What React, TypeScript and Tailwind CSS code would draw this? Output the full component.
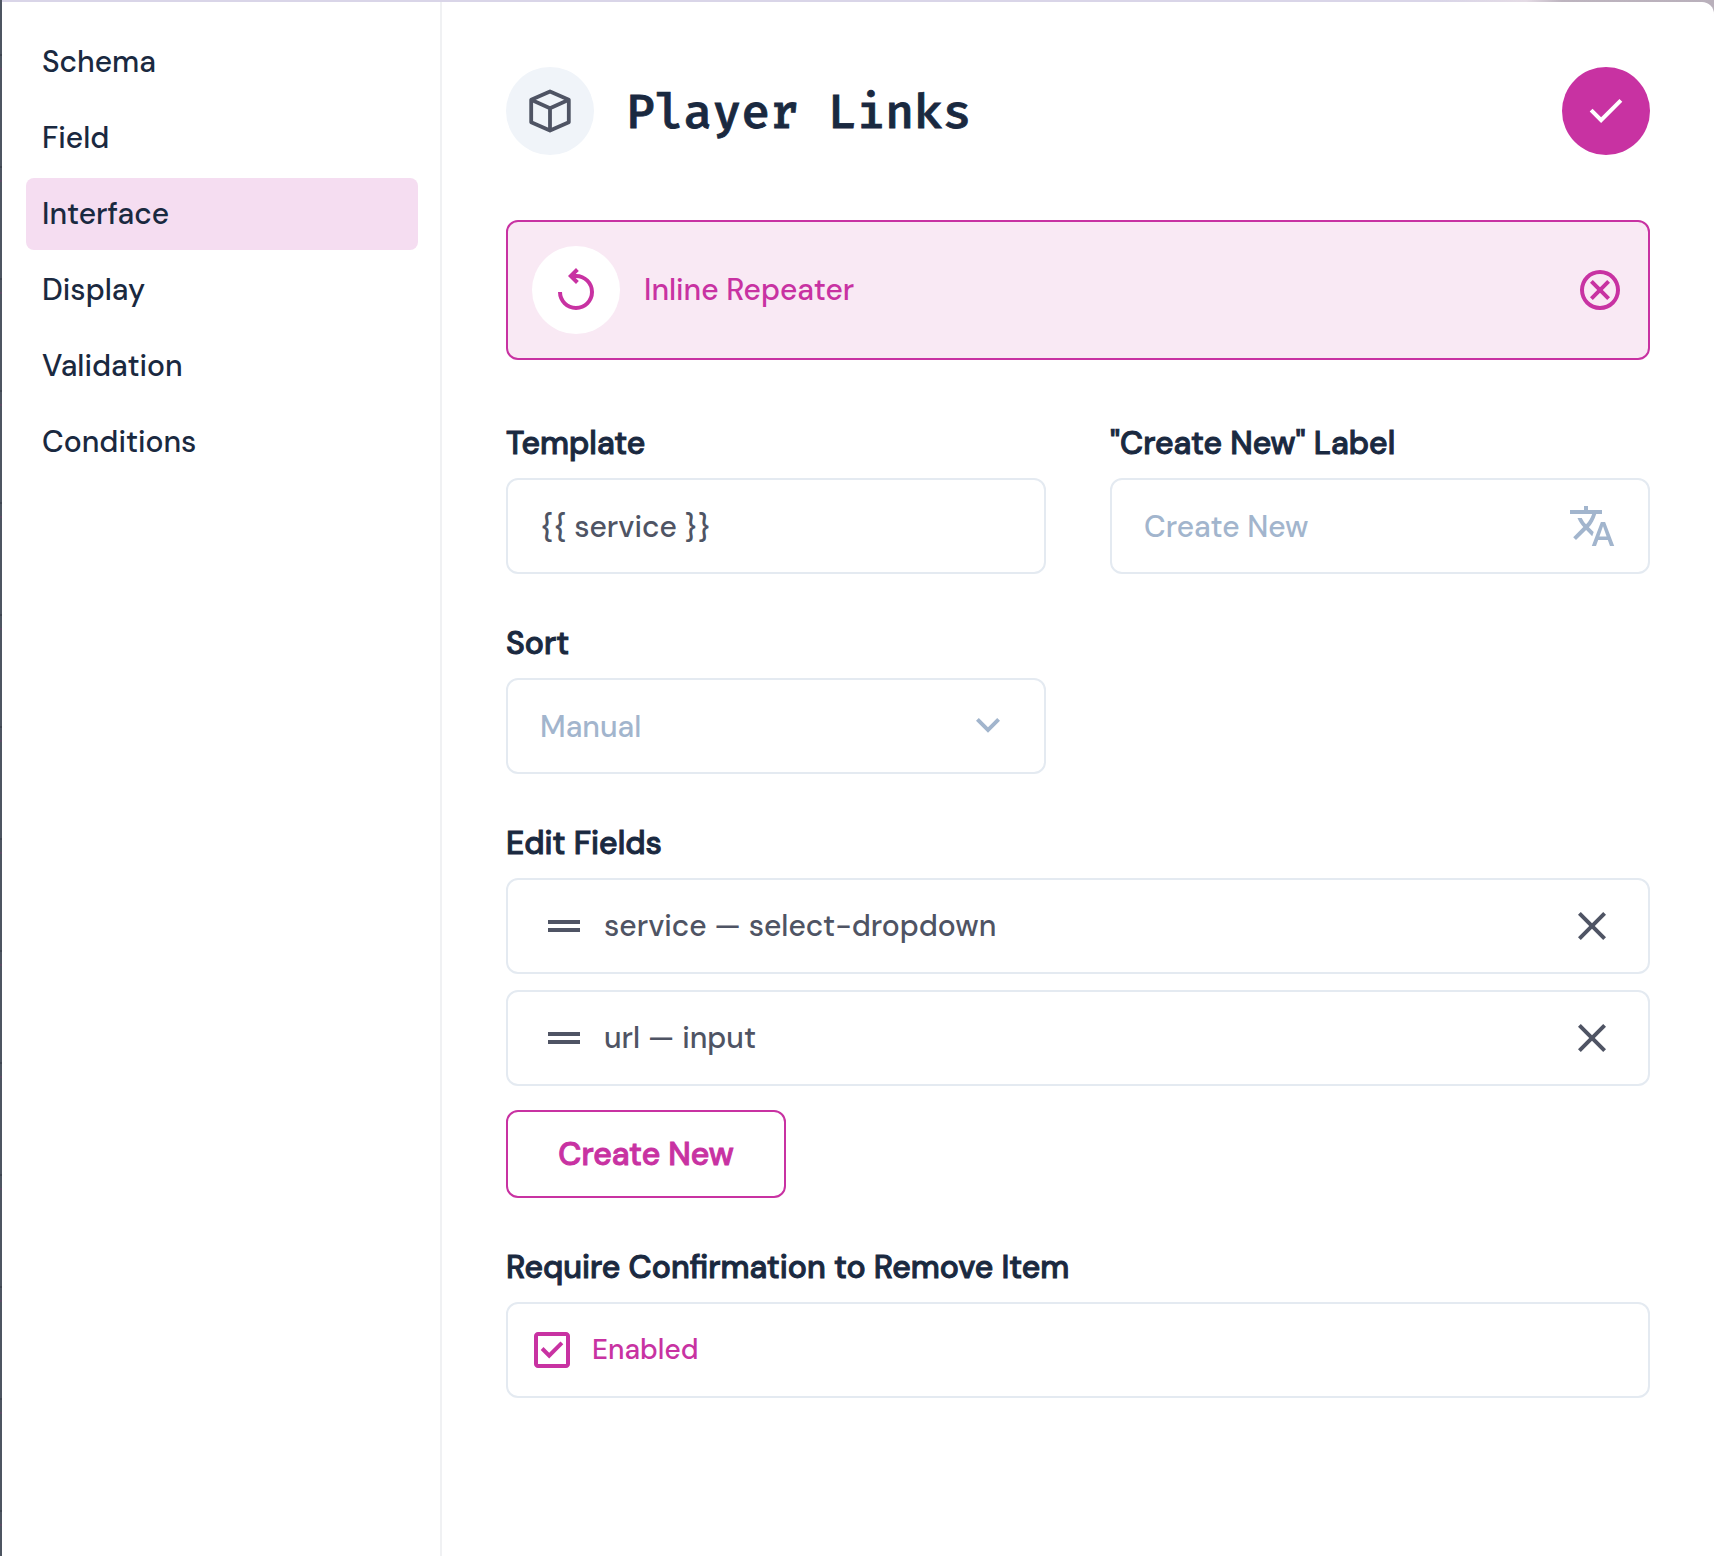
import type { ReactNode } from "react";

const icons = {
  check: "m382-240-228-228 57-57 171 171 367-367 57 57-424 424Z",
  replay:
    "M480-80q-75 0-140.5-28.5t-114-77q-48.5-48.5-77-114T120-440h80q0 117 81.5 198.5T480-160q117 0 198.5-81.5T760-440q0-117-81.5-198.5T480-720h-6l62 62-56 58-160-160 160-160 56 58-62 62h6q75 0 140.5 28.5t114 77q48.5 48.5 77 114T840-440q0 75-28.5 140.5t-77 114q-48.5 48.5-114 77T480-80Z",
  cancel:
    "m336-280 144-144 144 144 56-56-144-144 144-144-56-56-144 144-144-144-56 56 144 144-144 144 56 56ZM480-80q-83 0-156-31.5T197-197q-54-54-85.5-127T80-480q0-83 31.5-156T197-763q54-54 127-85.5T480-880q83 0 156 31.5T763-763q54 54 85.5 127T880-480q0 83-31.5 156T763-197q-54 54-127 85.5T480-80Zm0-80q134 0 227-93t93-227q0-134-93-227t-227-93q-134 0-227 93t-93 227q0 134 93 227t227 93Z",
  translate:
    "m476-80 182-480h84L924-80h-84l-43-122H603L560-80h-84ZM160-200l-56-56 202-202q-35-35-63.5-80T190-640h84q20 39 40 68t48 58q33-33 68.5-92.5T484-720H40v-80h280v-80h80v80h280v80H564q-21 72-63 148t-83 116l96 98-30 82-122-125-202 201Zm468-72h144l-72-204-72 204Z",
  expand: "M480-345 240-585l56-56 184 184 184-184 56 56-240 240Z",
  drag: "M160-360v-80h640v80H160Zm0-160v-80h640v80H160Z",
  close:
    "m256-200-56-56 224-224-224-224 56-56 224 224 224-224 56 56-224 224 224 224-56 56-224-224-224 224Z",
  checkbox:
    "m424-312 282-282-56-56-226 226-114-114-56 56 170 170ZM200-120q-33 0-56.5-23.500T120-200v-560q0-33 23.500-56.500T200-840h560q33 0 56.500 23.500T840-760v560q0 33-23.500 56.500T760-120H200Zm0-80h560v-560H200v560Z",
};

function Icon({ name }: { name: keyof typeof icons }) {
  return (
    <svg className="size-12 shrink-0" viewBox="0 -960 960 960" fill="currentColor">
      <path d={icons[name]} />
    </svg>
  );
}

function BoxIcon() {
  return (
    <svg className="size-12" viewBox="0 0 48 48" fill="none" stroke="currentColor" strokeWidth="3.8" strokeLinejoin="round">
      <path d="M24 4.500 42.800 12.800V35.200L24 43.500 5.200 35.200V12.800Z" />
      <path d="M5.200 12.800 24 21.300 42.800 12.800M24 21.300V43.500" />
    </svg>
  );
}

function NavItem({ label, active }: { label: string; active?: boolean }) {
  return (
    <a
      className={`flex h-18 items-center rounded-lg px-4 text-[#1a2940] ${active ? "bg-[#f5ddf1]" : ""}`}
    >
      {label}
    </a>
  );
}

function Field({ label, children, className = "" }: { label: string; children: ReactNode; className?: string }) {
  return (
    <section className={className}>
      <h2 className="mb-[18px] text-[32px] leading-[34px] text-[#1a2940] [-webkit-text-stroke:1px]">{label}</h2>
      {children}
    </section>
  );
}

const box = "flex h-24 items-center rounded-xl border-2 border-[#e4eaf1]";

function FieldRow({ text }: { text: string }) {
  return (
    <div className={`${box} pr-8 pl-8`}>
      <Icon name="drag" />
      <span className="ml-4 flex-1">{text}</span>
      <Icon name="close" />
    </div>
  );
}

export default function App() {
  return (
    <div className="h-[1556px] bg-[linear-gradient(90deg,#505763_0,#505763_2px,#d9d5e8_2px,#d9d5e8_1440px,#e4dbe5_1526px,#bdb4bf_1562px,#b9b0bb_1714px)] pt-0.5 font-['DM_Sans','Inter',sans-serif] text-[30px] leading-9 font-medium text-[#4f5464]">
      <div className="flex h-[1554px]">
        <div className="w-0.5 shrink-0 bg-[repeating-linear-gradient(180deg,#4d5561_0,#4d5561_52px,#3f4652_52px,#3f4652_54px,#4d5561_54px,#4d5561_66px,#5e4c66_66px,#5e4c66_68px,#4d5561_68px,#4d5561_112px)]" />
        <div className="flex flex-1 rounded-tr-xl bg-white">
          <nav className="flex w-[440px] shrink-0 flex-col gap-1 border-r-2 border-[#f0f1f3] pt-6 pr-[22px] pl-6">
            <NavItem label="Schema" />
            <NavItem label="Field" />
            <NavItem label="Interface" active />
            <NavItem label="Display" />
            <NavItem label="Validation" />
            <NavItem label="Conditions" />
          </nav>

          <main className="flex-1 px-16 pt-[65px]">
            <header className="flex items-center">
              <span className="flex size-22 items-center justify-center rounded-full bg-[#f0f4f9]">
                <BoxIcon />
              </span>
              <h1 className="ml-8 flex-1 pt-0.5 font-['Fira_Mono','DejaVu_Sans_Mono',monospace] text-[48px] leading-[56px] text-[#1a2940] [-webkit-text-stroke:0.8px]">
                Player Links
              </h1>
              <button className="flex size-22 items-center justify-center rounded-full bg-[#c832a2] text-white">
                <Icon name="check" />
              </button>
            </header>

            <div className="mt-[65px] flex h-35 items-center rounded-xl border-2 border-[#c832a2] bg-[#f9e9f4] px-6 text-[#c832a2]">
              <span className="flex size-22 items-center justify-center rounded-full bg-white">
                <Icon name="replay" />
              </span>
              <span className="ml-6 flex-1">Inline Repeater</span>
              <Icon name="cancel" />
            </div>

            <div className="mt-[66px] grid grid-cols-2 gap-x-16 gap-y-13">
              <Field label="Template">
                <div className={`${box} px-8`}>
                  <span className="pt-0.5">{"{{ service }}"}</span>
                </div>
              </Field>
              <Field label={'"Create New" Label'}>
                <div className={`${box} justify-between px-8 text-[#a2b5cd]`}>
                  <span className="pt-0.5">Create New</span>
                  <Icon name="translate" />
                </div>
              </Field>
              <Field label="Sort">
                <div className={`${box} justify-between px-8 text-[#a2b5cd]`}>
                  <span className="pt-0.5">Manual</span>
                  <Icon name="expand" />
                </div>
              </Field>
              <Field label="Edit Fields" className="col-span-2">
                <div className="flex flex-col gap-4">
                  <FieldRow text="service — select-dropdown" />
                  <FieldRow text="url — input" />
                </div>
                <button className="mt-6 flex h-22 w-70 items-center justify-center rounded-xl border-2 border-[#c832a2] text-[32px] text-[#c832a2] [-webkit-text-stroke:1px]">
                  Create New
                </button>
              </Field>
              <Field label="Require Confirmation to Remove Item" className="col-span-2">
                <div className={`${box} pl-5 text-[28px] text-[#c832a2]`}>
                  <Icon name="checkbox" />
                  <span className="ml-4">Enabled</span>
                </div>
              </Field>
            </div>
          </main>
        </div>
      </div>
    </div>
  );
}
